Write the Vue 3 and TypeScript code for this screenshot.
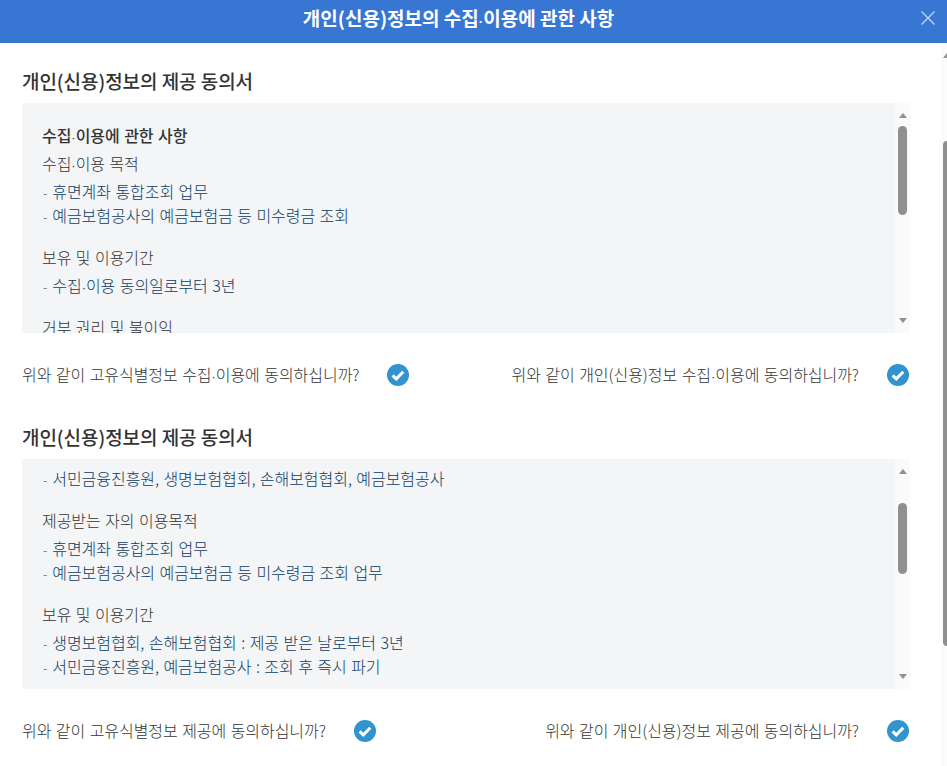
<script setup lang="ts">
import { h } from 'vue'

interface Block { label?: string; items: string[] }
interface Section {
  title: string
  heading?: string
  offset: string
  thumb: string
  blocks: Block[]
  left: string
  right: string
}

// Renders the middle dot with the narrow width it has in the source font.
const Txt = (props: { t: string }) => {
  const out: unknown[] = []
  props.t.split('·').forEach((part, i) => {
    if (i) out.push(h('span', { class: 'mid' }, '·'))
    out.push(part)
  })
  return out as never
}
Txt.props = ['t']

const sections: Section[] = [
  {
    title: '개인(신용)정보의 제공 동의서',
    heading: '수집·이용에 관한 사항',
    offset: 'first',
    thumb: 'thumb-a',
    blocks: [
      { label: '수집·이용 목적', items: ['휴면계좌 통합조회 업무', '예금보험공사의 예금보험금 등 미수령금 조회'] },
      { label: '보유 및 이용기간', items: ['수집·이용 동의일로부터 3년'] },
      { label: '거부 권리 및 불이익', items: [] },
    ],
    left: '위와 같이 고유식별정보 수집·이용에 동의하십니까?',
    right: '위와 같이 개인(신용)정보 수집·이용에 동의하십니까?',
  },
  {
    title: '개인(신용)정보의 제공 동의서',
    offset: 'second',
    thumb: 'thumb-b',
    blocks: [
      { items: ['서민금융진흥원, 생명보험협회, 손해보험협회, 예금보험공사'] },
      { label: '제공받는 자의 이용목적', items: ['휴면계좌 통합조회 업무', '예금보험공사의 예금보험금 등 미수령금 조회 업무'] },
      { label: '보유 및 이용기간', items: ['생명보험협회, 손해보험협회 : 제공 받은 날로부터 3년', '서민금융진흥원, 예금보험공사 : 조회 후 즉시 파기'] },
    ],
    left: '위와 같이 고유식별정보 제공에 동의하십니까?',
    right: '위와 같이 개인(신용)정보 제공에 동의하십니까?',
  },
]
</script>

<template>
  <div class="page">
    <header class="header">
      <h1><Txt t="개인(신용)정보의 수집·이용에 관한 사항" /></h1>
      <button class="close" aria-label="닫기">
        <svg width="14" height="14" viewBox="0 0 14 14"><path d="M.5.5l13 13M13.5.5l-13 13" stroke="#b9d6f8" stroke-width="1.4" fill="none" /></svg>
      </button>
    </header>
    <main class="main">
      <section v-for="s in sections" :key="s.offset" class="section">
        <h2>{{ s.title }}</h2>
        <div class="box-wrap">
          <div class="box" :class="s.offset">
            <h3 v-if="s.heading"><Txt :t="s.heading" /></h3>
            <div v-for="(b, i) in s.blocks" :key="i" class="block">
              <p v-if="b.label" class="label"><Txt :t="b.label" /></p>
              <ul v-if="b.items.length">
                <li v-for="it in b.items" :key="it"><span class="dash">-</span><Txt :t="it" /></li>
              </ul>
            </div>
          </div>
          <div class="bar">
            <i class="arrow up"></i>
            <div class="thumb-track"><b class="thumb" :class="s.thumb"></b></div>
            <i class="arrow down"></i>
          </div>
        </div>
        <div class="agree">
          <div class="agree-item">
            <span class="agree-text"><Txt :t="s.left" /></span>
            <svg class="check" viewBox="0 0 22 22"><circle cx="11" cy="11" r="11" fill="#3193d0" /><path d="M5.6 11.3l3.7 3.5 7-7" fill="none" stroke="#fff" stroke-width="3" /></svg>
          </div>
          <div class="agree-item end">
            <span class="agree-text"><Txt :t="s.right" /></span>
            <svg class="check" viewBox="0 0 22 22"><circle cx="11" cy="11" r="11" fill="#3193d0" /><path d="M5.6 11.3l3.7 3.5 7-7" fill="none" stroke="#fff" stroke-width="3" /></svg>
          </div>
        </div>
      </section>
    </main>
    <div class="page-bar">
      <i class="page-arrow"></i>
      <b class="page-thumb"></b>
    </div>
  </div>
</template>

<style>
.mid { font-family: "Liberation Sans", sans-serif; font-size: 13px; line-height: 1; }
</style>

<style scoped>
.page {
  position: relative;
  width: 947px;
  height: 766px;
  overflow: hidden;
  background: #fff;
  font-family: "Noto Sans CJK KR", "Noto Sans", sans-serif;
  color: #444;
}
.header {
  position: relative;
  height: 43px;
  background: #3776d3;
  display: flex;
  align-items: center;
  justify-content: center;
  padding: 0 30px 7px 0;
  box-sizing: border-box;
}
h1 {
  margin: 0;
  font-size: 19px;
  font-weight: 700;
  color: #fff;
  line-height: 26px;
}
.close {
  position: absolute;
  right: 12px;
  top: 11px;
  width: 14px;
  height: 14px;
  padding: 0;
  border: 0;
  background: none;
  display: block;
}
.close svg { display: block; }
.main { padding: 0 37px 0 22px; }
.section { height: 356px; }
h2 {
  margin: 0;
  padding-top: 25px;
  height: 60px;
  box-sizing: border-box;
  font-size: 19px;
  line-height: 26px;
  font-weight: 500;
  letter-spacing: -0.05px;
  color: #333;
}
.box-wrap {
  display: flex;
  height: 230px;
}
.box {
  flex: 1;
  overflow: hidden;
  background: #f4f5f7;
  padding: 20px 20px 0;
  box-sizing: border-box;
}
.box.second { padding-top: 7px; }
h3 {
  margin: 0 0 4px;
  font-size: 16px;
  line-height: 24px;
  font-weight: 500;
  word-spacing: 1px;
  letter-spacing: -0.05px;
  color: #333;
}
.block { margin-bottom: 18px; }
.label {
  margin: 0 0 4px;
  font-size: 16px;
  line-height: 24px;
  word-spacing: 1px;
  letter-spacing: -0.05px;
  font-weight: 300;
  color: #333;
}
ul { list-style: none; margin: 0; padding: 0; }
li {
  font-size: 16px;
  line-height: 24px;
  word-spacing: 1px;
  letter-spacing: -0.05px;
  font-weight: 300;
  color: #0b3c66;
}
.dash { color: #555; margin: 0 5px 0 1px; font-size: 13px; line-height: 1; }
.bar {
  width: 15px;
  background: #fafafa;
  display: flex;
  flex-direction: column;
  align-items: center;
  position: relative;
}
.arrow {
  width: 0;
  height: 0;
  border-left: 4px solid transparent;
  border-right: 4px solid transparent;
}
.arrow.up {
  border-bottom: 5px solid #8f8f8f;
  margin-top: 10px;
}
.arrow.down {
  border-top: 5px solid #8f8f8f;
  margin-bottom: 10px;
}
.thumb-track { flex: 1; width: 9px; position: relative; }
.thumb {
  display: block;
  position: absolute;
  left: 0;
  width: 9px;
  border-radius: 5px;
  background: #8f8f8f;
}
.thumb-a { top: 8px; height: 89px; }
.thumb-b { top: 29px; height: 71px; }
.agree {
  display: grid;
  grid-template-columns: 1fr 1fr;
  height: 66px;
  align-items: start;
  padding: 31px 1px 0 0;
  box-sizing: border-box;
}
.agree-item {
  display: flex;
  align-items: center;
  gap: 28px;
  height: 22px;
  font-size: 16px;
  word-spacing: 1px;
  letter-spacing: -0.05px;
  font-weight: 300;
  color: #333;
}
.agree-text { margin-top: -2px; }
.agree-item.end { justify-content: flex-end; }
.check { width: 22px; height: 22px; flex: none; }
.page-bar {
  position: absolute;
  right: 0;
  top: 43px;
  bottom: 0;
  width: 6px;
  background: #fbfbfb;
}
.page-arrow {
  position: absolute;
  right: 0;
  top: 10px;
  width: 0;
  height: 0;
  border-left: 4px solid transparent;
  border-bottom: 5px solid #8f8f8f;
}
.page-thumb {
  position: absolute;
  right: 0;
  top: 98px;
  width: 4px;
  height: 505px;
  border-radius: 4px 0 0 4px;
  background: #8f8f8f;
}
</style>
